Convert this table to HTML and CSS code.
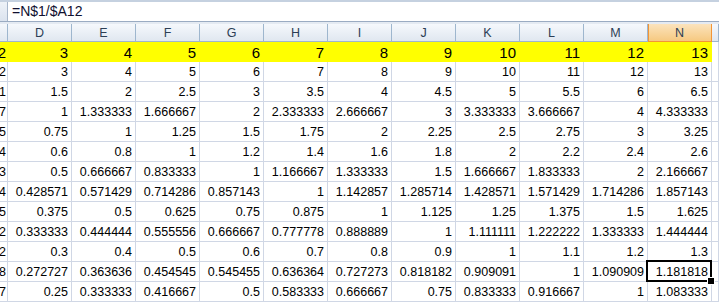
FILE: index.html
```html
<!DOCTYPE html>
<html lang="en">
<head>
    <meta charset="UTF-8">
    <title>Sheet1</title>
    <link rel="stylesheet" href="styles.css">
</head>
<body>
    <div class="formula-bar">
        <div class="name-stub"></div>
        <div class="formula">=N$1/$A12</div>
    </div>

    <div class="sheet">
        <div class="row head">
            <span></span><span>D</span><span>E</span><span>F</span><span>G</span><span>H</span><span>I</span><span>J</span><span>K</span><span>L</span><span>M</span><span class="picked">N</span><span></span>
        </div>
        <div class="row top">
            <span>2</span><span>3</span><span>4</span><span>5</span><span>6</span><span>7</span><span>8</span><span>9</span><span>10</span><span>11</span><span>12</span><span>13</span><span class="blank"></span>
        </div>
        <div class="row">
            <span>2</span><span>3</span><span>4</span><span>5</span><span>6</span><span>7</span><span>8</span><span>9</span><span>10</span><span>11</span><span>12</span><span>13</span><span></span>
        </div>
        <div class="row">
            <span>1</span><span>1.5</span><span>2</span><span>2.5</span><span>3</span><span>3.5</span><span>4</span><span>4.5</span><span>5</span><span>5.5</span><span>6</span><span>6.5</span><span></span>
        </div>
        <div class="row">
            <span>0.666667</span><span>1</span><span>1.333333</span><span>1.666667</span><span>2</span><span>2.333333</span><span>2.666667</span><span>3</span><span>3.333333</span><span>3.666667</span><span>4</span><span>4.333333</span><span></span>
        </div>
        <div class="row">
            <span>0.5</span><span>0.75</span><span>1</span><span>1.25</span><span>1.5</span><span>1.75</span><span>2</span><span>2.25</span><span>2.5</span><span>2.75</span><span>3</span><span>3.25</span><span></span>
        </div>
        <div class="row">
            <span>0.4</span><span>0.6</span><span>0.8</span><span>1</span><span>1.2</span><span>1.4</span><span>1.6</span><span>1.8</span><span>2</span><span>2.2</span><span>2.4</span><span>2.6</span><span></span>
        </div>
        <div class="row">
            <span>0.333333</span><span>0.5</span><span>0.666667</span><span>0.833333</span><span>1</span><span>1.166667</span><span>1.333333</span><span>1.5</span><span>1.666667</span><span>1.833333</span><span>2</span><span>2.166667</span><span></span>
        </div>
        <div class="row">
            <span>0.285714</span><span>0.428571</span><span>0.571429</span><span>0.714286</span><span>0.857143</span><span>1</span><span>1.142857</span><span>1.285714</span><span>1.428571</span><span>1.571429</span><span>1.714286</span><span>1.857143</span><span></span>
        </div>
        <div class="row">
            <span>0.25</span><span>0.375</span><span>0.5</span><span>0.625</span><span>0.75</span><span>0.875</span><span>1</span><span>1.125</span><span>1.25</span><span>1.375</span><span>1.5</span><span>1.625</span><span></span>
        </div>
        <div class="row">
            <span>0.222222</span><span>0.333333</span><span>0.444444</span><span>0.555556</span><span>0.666667</span><span>0.777778</span><span>0.888889</span><span>1</span><span>1.111111</span><span>1.222222</span><span>1.333333</span><span>1.444444</span><span></span>
        </div>
        <div class="row">
            <span>0.2</span><span>0.3</span><span>0.4</span><span>0.5</span><span>0.6</span><span>0.7</span><span>0.8</span><span>0.9</span><span>1</span><span>1.1</span><span>1.2</span><span>1.3</span><span></span>
        </div>
        <div class="row">
            <span>0.181818</span><span>0.272727</span><span>0.363636</span><span>0.454545</span><span>0.545455</span><span>0.636364</span><span>0.727273</span><span>0.818182</span><span>0.909091</span><span>1</span><span>1.090909</span><span class="active">1.181818</span><span></span>
        </div>
        <div class="row">
            <span>0.166667</span><span>0.25</span><span>0.333333</span><span>0.416667</span><span>0.5</span><span>0.583333</span><span>0.666667</span><span>0.75</span><span>0.833333</span><span>0.916667</span><span>1</span><span>1.083333</span><span></span>
        </div>
    </div>
</body>
</html>
```

FILE: styles.css
```css
* {
    margin: 0;
    padding: 0;
    box-sizing: border-box;
}

body {
    font-family: 'Liberation Sans', Arial, sans-serif;
    background: #fff;
    width: 719px;
    height: 304px;
    overflow: hidden;
}

/* formula bar */
.formula-bar {
    display: flex;
    height: 22px;
    border-top: 2px solid #c5d1e0;
    border-bottom: 1px solid #9aabc2;
    margin-bottom: 2px;
    box-shadow: 0 1px 0 #e4eaf2, 0 2px 0 #e4eaf2;
}

.name-stub {
    width: 8px;
    background: linear-gradient(#eef2f8, #dbe3ee);
    border-right: 1px solid #a7b6ca;
}

.formula {
    flex: 1;
    padding-left: 4px;
    font-size: 14px;
    line-height: 19px;
    color: #101030;
}

/* grid */
.sheet {
    display: flex;
    flex-direction: column;
}

.row {
    display: grid;
    grid-template-columns: 8px repeat(11, 64px) 1fr;
    height: 20px;
}

.row span {
    display: flex;
    align-items: center;
    justify-content: flex-end;
    padding-right: 3px;
    overflow: hidden;
    white-space: nowrap;
    border-right: 1px solid #d0d7e5;
    border-bottom: 1px solid #d0d7e5;
    font-size: 12.5px;
    color: #000;
}

.row span:first-child {
    padding-right: 1px;
}

.row.head {
    height: 18px;
}

.row.head span {
    justify-content: center;
    padding: 0;
    font-size: 12.5px;
    color: #2c3e55;
    background: linear-gradient(#f5f8fc, #e0e7f0);
    border-right: 1px solid #9eb6ce;
    border-bottom: 1px solid #9eb6ce;
}

.row.head span.picked {
    background: linear-gradient(#fbe3bd, #f6c980);
    border-right-color: #f29536;
    border-bottom-color: #f29536;
    box-shadow: inset 1px 0 0 #f29536;
}

.row.top span {
    background: #ffff00;
    border-right-color: #ffff00;
    border-bottom: none;
    font-size: 15px;
}

.row.top span.blank {
    background: #fff;
    border-right-color: #d0d7e5;
}

.row span.active {
    position: relative;
    overflow: visible;
}

.row span.active::before {
    content: '';
    position: absolute;
    left: -2px;
    top: -2px;
    right: -1px;
    bottom: -1px;
    border: 2px solid #000;
}

.row span.active::after {
    content: '';
    position: absolute;
    right: -4px;
    bottom: -4px;
    width: 6px;
    height: 6px;
    background: #000;
    border: 1px solid #fff;
}
```
